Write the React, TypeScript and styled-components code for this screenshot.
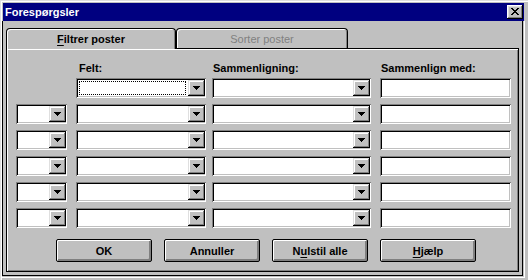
import React from "react";
import styled, { createGlobalStyle } from "styled-components";

// Forespørgsler-dialog, Win95/Access 2.0 look

const GlobalStyle = createGlobalStyle`
  html, body {
    margin: 0;
    padding: 0;
    background: #c0c0c0;
  }
  body {
    font-family: "Liberation Sans", Arial, sans-serif;
    font-size: 11px;
    color: #000;
  }
`;

const Window = styled.div`
  width: 528px;
  height: 280px;
  box-sizing: border-box;
  padding: 2px 3px 2px 2px;
  background: #c0c0c0;
  box-shadow: inset 1px 1px #dfdfdf, inset 2px 2px #fff;
  display: flex;
  flex-direction: column;
`;

const TitleBar = styled.div`
  height: 18px;
  margin: 1px 1px 0 1px;
  background: #000080;
  color: #fff;
  display: flex;
  align-items: center;
  justify-content: space-between;
  padding: 0 1px 0 2px;
  font-weight: bold;
  font-size: 11px;
  flex-shrink: 0;
`;

const CloseButton = styled.div`
  width: 16px;
  height: 14px;
  box-sizing: border-box;
  background: #c0c0c0;
  box-shadow: inset -1px -1px #000, inset 1px 1px #fff,
    inset -2px -2px #808080, inset 2px 2px #dfdfdf;
  display: flex;
  align-items: center;
  justify-content: center;
  padding-bottom: 1px;
`;

const ClientArea = styled.div`
  flex: 1;
  box-sizing: border-box;
  padding: 7px 0 0 4px;
  box-shadow: inset -1px -1px #fff, inset -2px -2px #c0c0c0,
    inset -3px -3px #000, inset 1px 0 #000;
`;

const TabStrip = styled.div`
  display: flex;
  align-items: flex-end;
  height: 20px;
`;

const Tab = styled.div<{ $active?: boolean; $width: number }>`
  width: ${(p) => p.$width}px;
  height: ${(p) => (p.$active ? 21 : 20)}px;
  margin-bottom: ${(p) => (p.$active ? -1 : 0)}px;
  box-sizing: border-box;
  border: 1px solid #000;
  border-bottom: none;
  border-radius: 4px 4px 0 0;
  background: #c0c0c0;
  box-shadow: inset 1px 1px #fff, inset -1px 0 #808080;
  display: flex;
  align-items: center;
  justify-content: center;
  padding-bottom: ${(p) => (p.$active ? 1 : 0)}px;
  font-weight: ${(p) => (p.$active ? "bold" : "normal")};
  color: ${(p) => (p.$active ? "#000" : "#808080")};
  position: relative;
  z-index: ${(p) => (p.$active ? 1 : 0)};
`;

const Panel = styled.div`
  width: 513px;
  height: 224px;
  box-sizing: border-box;
  border: 1px solid #000;
  box-shadow: inset 1px 1px #fff, inset -1px -1px #808080;
  padding: 13px 0 0 9px;
`;

const HeaderRow = styled.div`
  display: grid;
  grid-template-columns: 60px 136px 168px 131px;
  height: 16px;
`;

const HeaderLabel = styled.div<{ $indent: number }>`
  font-weight: bold;
  line-height: 13px;
  padding-left: ${(p) => p.$indent}px;
  white-space: nowrap;
`;

const FilterGrid = styled.div`
  display: grid;
  grid-template-columns: 60px 136px 168px 131px;
  grid-auto-rows: 20px;
  row-gap: 6px;
`;

const Field = styled.div<{ $width: number; $combo?: boolean }>`
  width: ${(p) => p.$width}px;
  height: 20px;
  box-sizing: border-box;
  padding: ${(p) => (p.$combo ? "2px 1px 2px 2px" : "2px")};
  background: #fff;
  box-shadow: inset 1px 1px #808080, inset -1px -1px #fff,
    inset 2px 2px #000, inset -2px -2px #c0c0c0;
  display: flex;
`;

const FocusRect = styled.div`
  flex: 1;
  margin: 1px 2px 1px 1px;
  border: 1px dotted #000;
`;

const Spacer = styled.div`
  flex: 1;
`;

const DropButton = styled.div`
  width: 17px;
  height: 16px;
  box-sizing: border-box;
  background: #c0c0c0;
  box-shadow: inset -1px -1px #000, inset 1px 1px #dfdfdf,
    inset -2px -2px #808080, inset 2px 2px #fff;
  display: flex;
  align-items: center;
  justify-content: center;
`;

const ButtonRow = styled.div`
  display: flex;
  gap: 12px;
  margin: 11px 0 0 40px;
`;

const PushButton = styled.button`
  width: 96px;
  height: 23px;
  box-sizing: border-box;
  padding: 0;
  border: 1px solid #000;
  border-radius: 2px;
  background: #c0c0c0;
  box-shadow: inset 1px 1px #fff, inset -1px -1px #808080,
    inset -2px -2px #808080;
  font-family: "Liberation Sans", Arial, sans-serif;
  font-size: 11px;
  font-weight: bold;
  color: #000;
  u {
    text-decoration-thickness: 1px;
    text-underline-offset: 2px;
  }
`;

const TabLabel = styled.span`
  u {
    text-decoration-thickness: 1px;
    text-underline-offset: 2px;
  }
`;

const CloseGlyph = () => (
  <svg width="8" height="7" viewBox="0 0 8 7" shapeRendering="crispEdges">
    <path
      d="M0 0h2v1h-2zM6 0h2v1h-2zM1 1h2v1h-2zM5 1h2v1h-2zM2 2h4v1h-4zM3 3h2v1h-2zM2 4h4v1h-4zM1 5h2v1h-2zM5 5h2v1h-2zM0 6h2v1h-2zM6 6h2v1h-2z"
      fill="#000"
    />
  </svg>
);

const Arrow = () => (
  <svg width="7" height="4" viewBox="0 0 7 4" shapeRendering="crispEdges">
    <path d="M0 0h7v1h-7zM1 1h5v1h-5zM2 2h3v1h-3zM3 3h1v1h-1z" fill="#000" />
  </svg>
);

const Combo = ({ width, focused }: { width: number; focused?: boolean }) => (
  <Field $width={width} $combo>
    {focused ? <FocusRect /> : <Spacer />}
    <DropButton>
      <Arrow />
    </DropButton>
  </Field>
);

const rows = [0, 1, 2, 3, 4, 5];

const App = () => {
  return (
    <>
      <GlobalStyle />
      <Window>
        <TitleBar>
          <span>Forespørgsler</span>
          <CloseButton>
            <CloseGlyph />
          </CloseButton>
        </TitleBar>

        <ClientArea>
          <TabStrip>
            <Tab $active $width={170}>
              <TabLabel>
                <u>F</u>iltrer poster
              </TabLabel>
            </Tab>
            <Tab $width={172}>Sorter poster</Tab>
          </TabStrip>

          <Panel>
            <HeaderRow>
              <div />
              <HeaderLabel $indent={3}>Felt:</HeaderLabel>
              <HeaderLabel $indent={1}>Sammenligning:</HeaderLabel>
              <HeaderLabel $indent={1}>Sammenlign med:</HeaderLabel>
            </HeaderRow>

            <FilterGrid>
              {rows.map((r) => (
                <React.Fragment key={r}>
                  {r === 0 ? <div /> : <Combo width={51} />}
                  <Combo width={130} focused={r === 0} />
                  <Combo width={159} />
                  <Field $width={131} />
                </React.Fragment>
              ))}
            </FilterGrid>

            <ButtonRow>
              <PushButton>OK</PushButton>
              <PushButton>Annuller</PushButton>
              <PushButton>
                N<u>u</u>lstil alle
              </PushButton>
              <PushButton>
                <u>H</u>jælp
              </PushButton>
            </ButtonRow>
          </Panel>
        </ClientArea>
      </Window>
    </>
  );
};

export default App;
